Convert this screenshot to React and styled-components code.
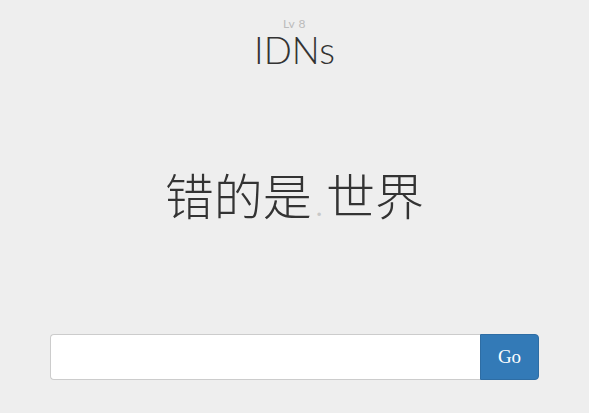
import styled, { createGlobalStyle } from "styled-components";

const Global = createGlobalStyle`
  html, body {
    margin: 0;
    padding: 0;
    background: #eeeeee;
  }
`;

const Page = styled.div`
  height: 413px;
  display: flex;
  flex-direction: column;
  align-items: center;
  font-family: Lato, "Noto Sans", sans-serif;
`;

const Header = styled.header`
  display: flex;
  flex-direction: column;
  align-items: center;
  padding-top: 17px;
`;

const Level = styled.div`
  font-size: 12px;
  line-height: 14px;
  letter-spacing: 0.5px;
  color: #bbbbbb;
`;

const Title = styled.h1`
  margin: 0;
  font-size: 37px;
  line-height: 37px;
  font-weight: 300;
  color: #333333;
`;

const Domain = styled.div`
  margin-top: 96px;
  font-family: "Noto Sans CJK SC", sans-serif;
  font-weight: 300;
  font-size: 49px;
  line-height: 60px;
  color: #333333;
  display: flex;
  align-items: baseline;
`;

const Dot = styled.span`
  font-family: Lato, sans-serif;
  font-size: 34px;
  line-height: 20px;
  color: #c8c8c8;
  padding: 0 3px;
  position: relative;
  top: 9px;
`;

const Form = styled.form`
  margin-top: auto;
  margin-bottom: 33px;
  width: 489px;
  display: flex;
`;

const Input = styled.input`
  flex: 1;
  height: 46px;
  box-sizing: border-box;
  border: 1px solid #cccccc;
  border-right: none;
  border-radius: 4px 0 0 4px;
  background: #ffffff;
  font-size: 18px;
  padding: 0 16px;
  outline: none;
`;

const Go = styled.button`
  width: 59px;
  height: 46px;
  border: 1px solid #2e6da4;
  border-radius: 0 4px 4px 0;
  background: #337ab7;
  color: #ffffff;
  font-family: "Liberation Serif", serif;
  font-size: 19px;
  padding: 0;
`;

function App() {
  return (
    <Page>
      <Global />
      <Header>
        <Level>Lv 8</Level>
        <Title>IDNs</Title>
      </Header>
      <Domain>
        <span>错的是</span>
        <Dot>·</Dot>
        <span>世界</span>
      </Domain>
      <Form onSubmit={(e) => e.preventDefault()}>
        <Input type="text" />
        <Go type="submit">Go</Go>
      </Form>
    </Page>
  );
}

export default App;
